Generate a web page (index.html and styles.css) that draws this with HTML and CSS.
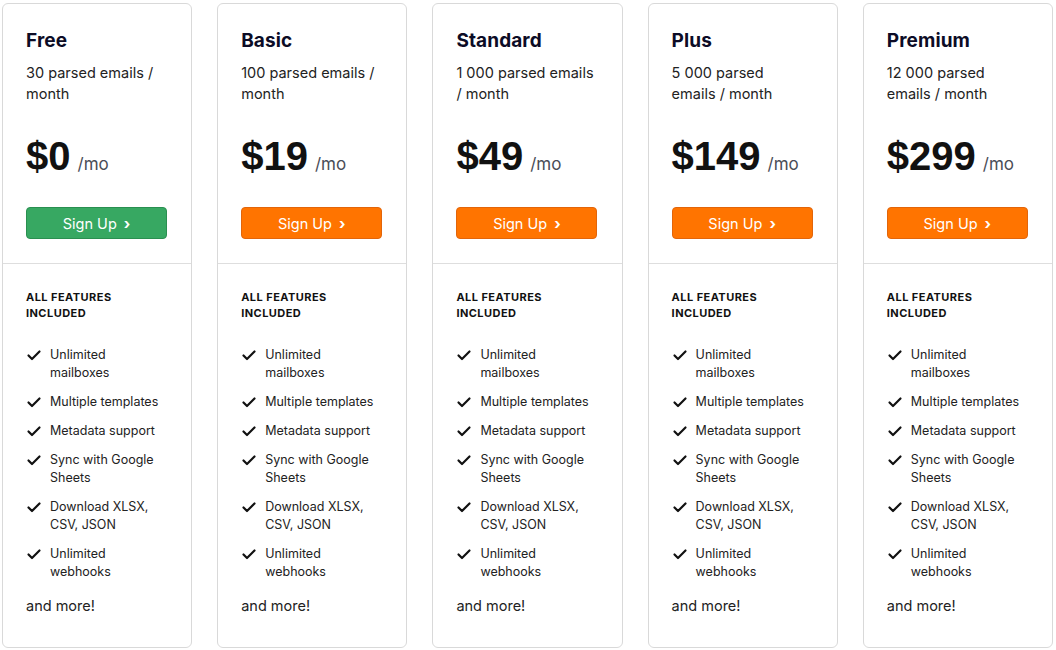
FILE: index.html
```html
<!DOCTYPE html>
<html lang="en">
<head>
<meta charset="utf-8">
<title>Pricing</title>
<link rel="stylesheet" href="styles.css">
</head>
<body>
<div class="plans">
  <div class="card">
    <div class="top">
      <h2 class="name">Free</h2>
      <p class="quota">30 parsed emails / month</p>
      <div class="price"><span class="amount">$0</span><span class="per">/mo</span></div>
      <a class="btn green" href="#">Sign Up <span class="chev">›</span></a>
    </div>
    <div class="bottom">
      <div class="feat-title">ALL FEATURES INCLUDED</div>
      <ul class="feats">
        <li><svg viewBox="0 0 16 16"><path d="M2.5 8.5l3.5 3.5L13.5 4.5"/></svg><span>Unlimited mailboxes</span></li>
        <li><svg viewBox="0 0 16 16"><path d="M2.5 8.5l3.5 3.5L13.5 4.5"/></svg><span>Multiple templates</span></li>
        <li><svg viewBox="0 0 16 16"><path d="M2.5 8.5l3.5 3.5L13.5 4.5"/></svg><span>Metadata support</span></li>
        <li><svg viewBox="0 0 16 16"><path d="M2.5 8.5l3.5 3.5L13.5 4.5"/></svg><span>Sync with Google Sheets</span></li>
        <li><svg viewBox="0 0 16 16"><path d="M2.5 8.5l3.5 3.5L13.5 4.5"/></svg><span>Download XLSX, CSV, JSON</span></li>
        <li><svg viewBox="0 0 16 16"><path d="M2.5 8.5l3.5 3.5L13.5 4.5"/></svg><span>Unlimited webhooks</span></li>
      </ul>
      <p class="more">and more!</p>
    </div>
  </div>
  <div class="card">
    <div class="top">
      <h2 class="name">Basic</h2>
      <p class="quota">100 parsed emails / month</p>
      <div class="price"><span class="amount">$19</span><span class="per">/mo</span></div>
      <a class="btn orange" href="#">Sign Up <span class="chev">›</span></a>
    </div>
    <div class="bottom">
      <div class="feat-title">ALL FEATURES INCLUDED</div>
      <ul class="feats">
        <li><svg viewBox="0 0 16 16"><path d="M2.5 8.5l3.5 3.5L13.5 4.5"/></svg><span>Unlimited mailboxes</span></li>
        <li><svg viewBox="0 0 16 16"><path d="M2.5 8.5l3.5 3.5L13.5 4.5"/></svg><span>Multiple templates</span></li>
        <li><svg viewBox="0 0 16 16"><path d="M2.5 8.5l3.5 3.5L13.5 4.5"/></svg><span>Metadata support</span></li>
        <li><svg viewBox="0 0 16 16"><path d="M2.5 8.5l3.5 3.5L13.5 4.5"/></svg><span>Sync with Google Sheets</span></li>
        <li><svg viewBox="0 0 16 16"><path d="M2.5 8.5l3.5 3.5L13.5 4.5"/></svg><span>Download XLSX, CSV, JSON</span></li>
        <li><svg viewBox="0 0 16 16"><path d="M2.5 8.5l3.5 3.5L13.5 4.5"/></svg><span>Unlimited webhooks</span></li>
      </ul>
      <p class="more">and more!</p>
    </div>
  </div>
  <div class="card">
    <div class="top">
      <h2 class="name">Standard</h2>
      <p class="quota">1 000 parsed emails / month</p>
      <div class="price"><span class="amount">$49</span><span class="per">/mo</span></div>
      <a class="btn orange" href="#">Sign Up <span class="chev">›</span></a>
    </div>
    <div class="bottom">
      <div class="feat-title">ALL FEATURES INCLUDED</div>
      <ul class="feats">
        <li><svg viewBox="0 0 16 16"><path d="M2.5 8.5l3.5 3.5L13.5 4.5"/></svg><span>Unlimited mailboxes</span></li>
        <li><svg viewBox="0 0 16 16"><path d="M2.5 8.5l3.5 3.5L13.5 4.5"/></svg><span>Multiple templates</span></li>
        <li><svg viewBox="0 0 16 16"><path d="M2.5 8.5l3.5 3.5L13.5 4.5"/></svg><span>Metadata support</span></li>
        <li><svg viewBox="0 0 16 16"><path d="M2.5 8.5l3.5 3.5L13.5 4.5"/></svg><span>Sync with Google Sheets</span></li>
        <li><svg viewBox="0 0 16 16"><path d="M2.5 8.5l3.5 3.5L13.5 4.5"/></svg><span>Download XLSX, CSV, JSON</span></li>
        <li><svg viewBox="0 0 16 16"><path d="M2.5 8.5l3.5 3.5L13.5 4.5"/></svg><span>Unlimited webhooks</span></li>
      </ul>
      <p class="more">and more!</p>
    </div>
  </div>
  <div class="card">
    <div class="top">
      <h2 class="name">Plus</h2>
      <p class="quota">5 000 parsed<br>emails / month</p>
      <div class="price"><span class="amount">$149</span><span class="per">/mo</span></div>
      <a class="btn orange" href="#">Sign Up <span class="chev">›</span></a>
    </div>
    <div class="bottom">
      <div class="feat-title">ALL FEATURES INCLUDED</div>
      <ul class="feats">
        <li><svg viewBox="0 0 16 16"><path d="M2.5 8.5l3.5 3.5L13.5 4.5"/></svg><span>Unlimited mailboxes</span></li>
        <li><svg viewBox="0 0 16 16"><path d="M2.5 8.5l3.5 3.5L13.5 4.5"/></svg><span>Multiple templates</span></li>
        <li><svg viewBox="0 0 16 16"><path d="M2.5 8.5l3.5 3.5L13.5 4.5"/></svg><span>Metadata support</span></li>
        <li><svg viewBox="0 0 16 16"><path d="M2.5 8.5l3.5 3.5L13.5 4.5"/></svg><span>Sync with Google Sheets</span></li>
        <li><svg viewBox="0 0 16 16"><path d="M2.5 8.5l3.5 3.5L13.5 4.5"/></svg><span>Download XLSX, CSV, JSON</span></li>
        <li><svg viewBox="0 0 16 16"><path d="M2.5 8.5l3.5 3.5L13.5 4.5"/></svg><span>Unlimited webhooks</span></li>
      </ul>
      <p class="more">and more!</p>
    </div>
  </div>
  <div class="card">
    <div class="top">
      <h2 class="name">Premium</h2>
      <p class="quota">12 000 parsed<br>emails / month</p>
      <div class="price"><span class="amount">$299</span><span class="per">/mo</span></div>
      <a class="btn orange" href="#">Sign Up <span class="chev">›</span></a>
    </div>
    <div class="bottom">
      <div class="feat-title">ALL FEATURES INCLUDED</div>
      <ul class="feats">
        <li><svg viewBox="0 0 16 16"><path d="M2.5 8.5l3.5 3.5L13.5 4.5"/></svg><span>Unlimited mailboxes</span></li>
        <li><svg viewBox="0 0 16 16"><path d="M2.5 8.5l3.5 3.5L13.5 4.5"/></svg><span>Multiple templates</span></li>
        <li><svg viewBox="0 0 16 16"><path d="M2.5 8.5l3.5 3.5L13.5 4.5"/></svg><span>Metadata support</span></li>
        <li><svg viewBox="0 0 16 16"><path d="M2.5 8.5l3.5 3.5L13.5 4.5"/></svg><span>Sync with Google Sheets</span></li>
        <li><svg viewBox="0 0 16 16"><path d="M2.5 8.5l3.5 3.5L13.5 4.5"/></svg><span>Download XLSX, CSV, JSON</span></li>
        <li><svg viewBox="0 0 16 16"><path d="M2.5 8.5l3.5 3.5L13.5 4.5"/></svg><span>Unlimited webhooks</span></li>
      </ul>
      <p class="more">and more!</p>
    </div>
  </div>
</div>
</body>
</html>
```

FILE: styles.css
```css
* { box-sizing: border-box; }
html, body { margin: 0; padding: 0; background: #ffffff; }
body {
  font-family: Inter, "Noto Sans", "Liberation Sans", sans-serif;
  color: #1e1e1e;
}
.plans {
  display: grid;
  grid-template-columns: repeat(5, 1fr);
  gap: 25px;
  padding: 3px 3px 0 2px;
}
.card {
  height: 645px;
  border: 1px solid #d9d9d9;
  border-radius: 6px;
  display: flex;
  flex-direction: column;
  background: #fff;
}
.top {
  padding: 25px 23px 24px 23px;
  border-bottom: 1px solid #dedede;
  display: flex;
  flex-direction: column;
}
.name {
  margin: 0;
  font-size: 19px;
  line-height: 24px;
  font-weight: 700;
  color: #0c0c26;
  letter-spacing: 0.1px;
}
.quota {
  margin: 9px 0 0;
  font-size: 14.5px;
  line-height: 21px;
  color: #222;
  min-height: 42px;
}
.price {
  margin-top: 30px;
  display: flex;
  align-items: baseline;
  height: 44px;
}
.amount {
  font-family: "Liberation Sans", Arial, sans-serif;
  font-weight: 700;
  font-size: 40px;
  line-height: 44px;
  color: #111;
}
.per {
  margin-left: 7px;
  font-size: 17px;
  color: #4a4d57;
}
.btn {
  margin-top: 29px;
  height: 32px;
  width: 141px;
  border-radius: 4px;
  display: flex;
  align-items: center;
  justify-content: center;
  gap: 7px;
  color: #fff;
  font-size: 14.5px;
  font-weight: 400;
  text-decoration: none;
}
.chev { font-weight: 700; font-size: 15px; }
.green { background: #37a862; border: 1px solid #2a8f50; }
.orange { background: #ff7400; border: 1px solid #e2650a; }
.bottom {
  padding: 25px 23px 0 23px;
}
.feat-title {
  font-size: 11px;
  line-height: 16px;
  font-weight: 700;
  color: #111;
  width: 120px;
  letter-spacing: 0.45px;
}
.feats {
  list-style: none;
  margin: 25px 0 0;
  padding: 0;
  display: flex;
  flex-direction: column;
  gap: 11px;
}
.feats li {
  display: flex;
  gap: 8px;
  font-size: 12.5px;
  line-height: 18px;
  color: #222;
}
.feats svg {
  flex: none;
  width: 16px;
  height: 16px;
  margin-top: 1px;
  fill: none;
  stroke: #111;
  stroke-width: 2.2;
  stroke-linecap: round;
  stroke-linejoin: round;
}
.feats span { max-width: 120px; }
.more {
  margin: 14px 0 0;
  font-size: 14.5px;
  line-height: 21px;
  color: #222;
}
```
